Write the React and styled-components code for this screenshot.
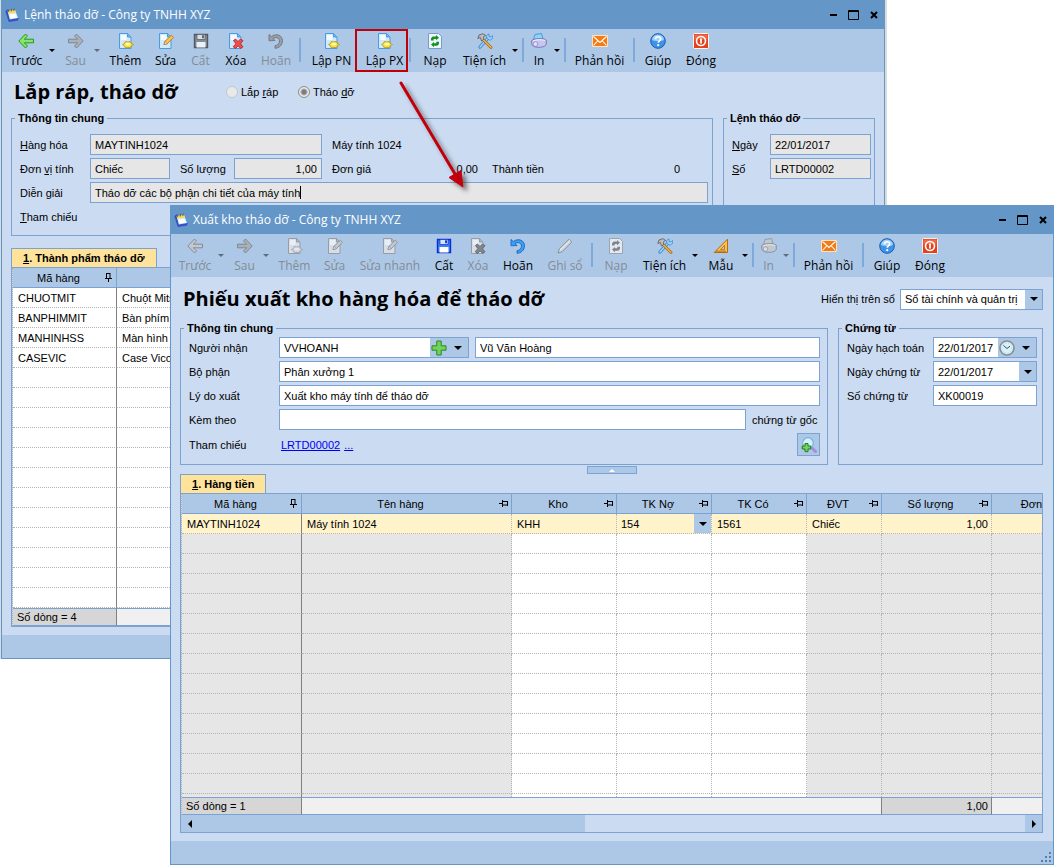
import React from "react";
import styled, { createGlobalStyle, css } from "styled-components";

const c = {
  title: "#6496c8",
  bar: "#adc8e7",
  body: "#cbdbf1",
  line: "#7ba2d0",
  readonly: "#e6e6e6",
  tab: "#ffe39b",
  active: "#fff3cc",
  red: "#c00008",
};
const uiFont = '"Open Sans", "Noto Sans", sans-serif';
const formFont = '"Liberation Sans", Arial, sans-serif';

const GlobalStyle = createGlobalStyle`
  *, *::before, *::after { box-sizing: border-box; }
  body { margin: 0; background: #fff; color: #000; font: 11px/14px ${formFont}; }
  button, input, select { font: inherit; color: inherit; margin: 0; border-radius: 0; }
`;

/* ---------- desktop and windows ---------- */

const Desktop = styled.main`
  position: relative;
  min-height: 100vh;
  overflow: hidden;
  background: linear-gradient(#d9dcdc, #d9dcdc) 0 0 / 1px 659px no-repeat #fff;
`;

const Window = styled.section`
  position: absolute;
  top: ${(p) => p.$top}px;
  left: ${(p) => p.$left}px;
  right: ${(p) => p.$right}px;
  border: 1px solid ${c.title};
  background: ${c.body};
  box-shadow: ${(p) => (p.$behind ? "2px 0 0 #dcdcdc" : "none")};
`;

const TitleBar = styled.header`
  display: flex;
  align-items: center;
  gap: 5px;
  height: 28px;
  padding: 0 4px 0 3px;
  background: ${c.title};
  color: #fff;
  font: 12px/16px ${uiFont};
`;

const TitleText = styled.span`
  flex: 1;
  white-space: nowrap;
`;

const WindowButtons = styled.div`
  display: flex;
  gap: 8px;
`;

const WindowButton = styled.button`
  display: flex;
  padding: 0;
  border: 0;
  background: none;
`;

const StatusBar = styled.footer`
  display: flex;
  justify-content: flex-end;
  align-items: flex-end;
  height: 23px;
  background: ${c.bar};
`;

const Body = styled.div`
  padding: 0 ${(p) => p.$right}px ${(p) => p.$bottom}px 9px;
`;

/* ---------- toolbar ---------- */

const Toolbar = styled.nav`
  display: flex;
  height: 43px;
  padding: 0 2px;
  background: ${c.bar};
`;

const ToolButton = styled.button`
  flex: none;
  display: flex;
  flex-direction: column;
  align-items: center;
  gap: 4px;
  width: ${(p) => p.$w}px;
  padding: 4px 0 0 ${(p) => (p.$indent ? 6 : 0)}px;
  border: 0;
  background: none;
  font: 12px/16px ${uiFont};
  white-space: nowrap;
  &:disabled {
    color: #858b93;
  }
  &:disabled svg {
    filter: grayscale(1) opacity(0.75);
  }
  ${(p) =>
    p.$marked &&
    css`
      outline: 2px solid ${c.red};
      outline-offset: -2px;
    `}
`;

const DropButton = styled.button`
  flex: none;
  display: flex;
  justify-content: center;
  align-items: center;
  width: 7px;
  margin-right: 3px;
  padding: 0;
  border: 0;
  background: none;
  &:disabled {
    color: #5f6c7c;
  }
`;

const Divider = styled.span`
  flex: none;
  width: 2px;
  height: 24px;
  margin: 9px 1px 0;
  background: #7fa9db;
`;

/* ---------- form ---------- */

const Heading = styled.div`
  display: flex;
  align-items: center;
  height: ${(p) => p.$h}px;
  padding-left: 3px;
`;

const PageTitle = styled.h1`
  flex: ${(p) => (p.$basis ? `0 0 ${p.$basis}px` : "1")};
  margin: 0;
  font: bold 20px/26px ${uiFont};
  white-space: nowrap;
`;

const Choice = styled.label`
  display: flex;
  align-items: center;
  gap: 3px;
  width: 72px;
  white-space: nowrap;
`;

const Radio = styled.input`
  appearance: none;
  width: 12px;
  height: 12px;
  border: 1px solid ${(p) => (p.defaultChecked ? "#8c8c8c" : "#c4c8ce")};
  border-radius: 50%;
  background: #e9e9e9;
  &:checked {
    background: radial-gradient(circle, #7d7d7d 0 2px, #e9e9e9 4px);
  }
`;

const Groups = styled.div`
  display: flex;
  gap: 10px;
`;

const Group = styled.fieldset`
  display: flex;
  flex-direction: column;
  gap: 3px;
  flex: ${(p) => (p.$w ? `0 0 ${p.$w}px` : "1")};
  min-width: 0;
  margin: 0;
  padding: ${(p) => p.$top}px ${(p) => p.$right}px 8px 8px;
  border: 1px solid ${c.line};
`;

const Legend = styled.legend`
  margin-left: -5px;
  padding: 0 3px;
  font-weight: bold;
  line-height: 14px;
`;

const Row = styled.div`
  display: flex;
  align-items: center;
  min-height: 21px;
  white-space: nowrap;
`;

const Label = styled.label`
  flex: none;
  width: ${(p) => p.$w}px;
`;

const Spacer = styled.span`
  flex: ${(p) => (p.$w ? `0 0 ${p.$w}px` : "1")};
`;

const Figure = styled.output`
  flex: none;
  width: ${(p) => p.$w}px;
  text-align: right;
`;

const Frame = styled.div`
  flex: ${(p) => (p.$w ? `0 0 ${p.$w}px` : "1")};
  display: flex;
  min-width: 0;
  height: 21px;
  border: 1px solid ${c.line};
  background: ${(p) => (p.$readonly ? c.readonly : "#fff")};
`;

const TextInput = styled.input`
  flex: 1;
  min-width: 0;
  width: 100%;
  padding: 0 4px;
  border: 0;
  outline: 0;
  background: transparent;
  text-align: ${(p) => (p.$end ? "right" : "left")};
`;

const GrowingInput = styled(TextInput)`
  flex: none;
  width: auto;
  field-sizing: content;
  padding-right: 0;
`;

const Caret = styled.span`
  width: 1px;
  margin: 3px 0;
  background: #000;
`;

const FrameButton = styled.button`
  flex: none;
  display: flex;
  justify-content: center;
  align-items: center;
  width: ${(p) => p.$w}px;
  padding: 0;
  border: 0;
  background: ${c.bar};
`;

const SelectBox = styled.select`
  appearance: none;
  flex: 1;
  min-width: 0;
  padding: 0 4px;
  border: 0;
  background: transparent;
`;

const SelectArrow = styled.span`
  flex: none;
  display: flex;
  justify-content: center;
  align-items: center;
  width: 17px;
  background: ${c.bar};
  pointer-events: none;
`;

const Link = styled.a`
  margin-left: 2px;
  color: #0000f0;
  text-decoration: underline;
`;

const SearchButton = styled.button`
  display: flex;
  justify-content: center;
  align-items: center;
  width: 23px;
  height: 23px;
  padding: 0;
  border: 1px solid ${c.line};
  background: ${c.bar};
`;

const Collapser = styled.button`
  display: flex;
  justify-content: center;
  align-items: center;
  width: 50px;
  height: 8px;
  margin: 1px auto 0;
  padding: 0;
  border: 1px solid ${c.line};
  background: ${c.bar};
`;

/* ---------- grid ---------- */

const GridArea = styled.div`
  padding-top: ${(p) => p.$top}px;
`;

const Tab = styled.button`
  display: block;
  height: 19px;
  padding: 0 11px;
  border: 1px solid ${c.line};
  border-bottom: 0;
  background: ${c.tab};
  font-weight: bold;
  white-space: nowrap;
`;

const GridFrame = styled.div`
  border: 1px solid ${c.line};
`;

const Grid = styled.table`
  table-layout: fixed;
  width: 100%;
  border-spacing: 0;
  border-left: 1px dotted #b4b4b4;
`;

const HeadCell = styled.th`
  height: 20px;
  padding: 0 ${(p) => (p.$last ? 0 : 3)}px 0 0;
  overflow: hidden;
  border-right: ${(p) => (p.$last ? "0" : `1px solid ${c.line}`)};
  border-bottom: 1px solid ${c.line};
  background: ${c.bar};
  font-weight: normal;
  white-space: nowrap;
`;

const HeadInner = styled.div`
  display: flex;
  align-items: center;
  & > span {
    flex: 1;
    text-align: ${(p) => (p.$last ? "right" : "center")};
  }
`;

const Cell = styled.td`
  height: ${(p) => (p.$stub ? 3 : 20)}px;
  padding: 0 ${(p) => (p.$edit ? 0 : 3)}px 0 ${(p) => (p.$edit ? 0 : 5)}px;
  overflow: hidden;
  border-right: 1px ${(p) => (p.$first ? "solid #808080" : "dotted #b4b4b4")};
  border-bottom: ${(p) => (p.$stub ? "0" : "1px dotted #b4b4b4")};
  background: ${(p) => (p.$active ? c.active : p.$locked ? c.readonly : "#fff")};
  text-align: ${(p) => (p.$end ? "right" : "left")};
  white-space: nowrap;
  &:last-child {
    border-right: 0;
  }
`;

const CellEditor = styled.div`
  display: flex;
  height: 19px;
`;

const FootCell = styled.td`
  height: 18px;
  padding: 0 3px 0 4px;
  border-top: 1px solid ${c.line};
  border-bottom: 1px solid ${c.line};
  border-right: 1px solid #808080;
  background: ${(p) => (p.$sum ? "#d6d6d6" : "#f0f0f0")};
  text-align: ${(p) => (p.$end ? "right" : "left")};
  &:last-child {
    border-right: 0;
  }
`;

const ScrollBar = styled.div`
  display: flex;
  height: 17px;
  background: ${c.body};
`;

const ScrollThumb = styled.span`
  flex: 0 0 45%;
  background: ${c.bar};
`;

const Pointer = styled.svg`
  position: absolute;
  left: 390px;
  top: 76px;
  z-index: 1;
  pointer-events: none;
`;

/* ---------- drawings ---------- */

const Triangle = ({ size = 8 }) => (
  <svg width={size} height={size / 2} viewBox="0 0 8 4" fill="currentColor" aria-hidden="true">
    <path d="M0 0h8L4 4z" />
  </svg>
);

const Page = () => (
  <>
    <path d="M1.500.500h8l3.500 3.500v11.500h-11.500z" fill="#cfeafd" stroke="#4a9be0" />
    <path d="M3 2h5.500v5H3z" fill="#fff" opacity=".8" />
    <path d="M9.500.500V4h3.500z" fill="#7fbdf2" stroke="#4a9be0" />
  </>
);

const drawings = {
  back: (
    <path d="M.800 8L7.500 1l2 2L6.300 6.200h9.200v3.600H6.300L9.500 13l-2 2z" fill="#8be36b" stroke="#1f9a1f" strokeLinejoin="round" />
  ),
  next: (
    <path d="M15.200 8L8.500 1l-2 2 3.200 3.200H.500v3.600h9.200L6.500 13l2 2z" fill="#a9a9a9" stroke="#707070" strokeLinejoin="round" />
  ),
  add: (
    <>
      <Page />
      <path d="M4.500 11.500l2-1 .8-2 2.500.5 2.500-.5 1 2 2.200 1-2.200 1.300-1 2-2.500-.4-2.500.4-.8-2z" fill="#f5e64a" stroke="#b99a14" strokeWidth=".9" />
      <ellipse cx="9.800" cy="11" rx="2.400" ry="1.200" fill="#fff9a8" />
    </>
  ),
  edit: (
    <>
      <Page />
      <path d="M6 11.500l1-3.200 6.300-6 2.200 2-6.200 6.400z" fill="#ffc64a" stroke="#b9781a" strokeWidth=".9" />
      <path d="M6 11.500l1-3.200 2.300 2.400z" fill="#fff1cf" stroke="#8a5a18" strokeWidth=".5" />
    </>
  ),
  save: (
    <>
      <path d="M1.500 1.500h13v13h-13z" fill="#3f7df0" stroke="#0a2fd0" strokeWidth="1.400" />
      <path d="M4 1.500h8v5H4z" fill="#d7e6ff" stroke="#0a2fd0" strokeWidth=".7" />
      <path d="M9 2.300h2v3H9z" fill="#1b46d8" />
      <path d="M3.500 9h9v5.500h-9z" fill="#fff" />
    </>
  ),
  remove: (
    <>
      <Page />
      <path d="M5.500 7.500l2-1.500L10 8.500 12.500 6l2.500 1.700-2.800 3 2.800 3-2.300 1.800L10 12.800l-2.500 2.700-2.300-1.800 2.700-3z" fill="#f0504a" stroke="#b51218" strokeWidth=".8" />
    </>
  ),
  undo: (
    <path d="M1 1.500v6.300l6-.3-2-2c3-1.800 6.500-.6 6.500 2.500 0 2.700-2 4.300-4.500 4.800v2.500c4-.2 7.500-3 7.500-7.500C14.500 2.300 8.500-.2 3.300 3.500z" fill="#3d9ff0" stroke="#1465c4" strokeWidth=".9" strokeLinejoin="round" />
  ),
  pen: (
    <>
      <path d="M1 15l1.200-4L12 1.300 14.800 4 5 13.800z" fill="#d9d9d9" stroke="#757575" strokeWidth=".9" />
      <path d="M3 12L13 2.500" stroke="#fff" />
    </>
  ),
  reload: (
    <>
      <path d="M1.500.500h10l3 3v12h-13z" fill="#eef4fd" stroke="#7b9cc8" />
      <path d="M4 7.500V5.200l1.700-1.700H9V2l3 2.700L9 7.300V6H6.700v1.500z" fill="#17921c" />
      <path d="M12 8.800v2.300l-1.700 1.700H7v1.500l-3-2.700L7 9v1.300h2.300V8.800z" fill="#17921c" />
    </>
  ),
  tools: (
    <>
      <path d="M3 14l8-9" stroke="#2f82d4" strokeWidth="3.200" strokeLinecap="round" />
      <path d="M3 14l8-9" stroke="#9fd5fa" strokeWidth="1.600" strokeLinecap="round" />
      <path d="M10 5.500L9.500 2.500 12 .800v3h2.500L16 2.200l-.500 3.300-2.500 1.800z" fill="#9fd5fa" stroke="#2f82d4" strokeWidth=".7" />
      <path d="M6.500 7l7.500 7.500" stroke="#a3661b" strokeWidth="2.800" strokeLinecap="round" />
      <path d="M6.500 7l7.500 7.500" stroke="#f5b54a" strokeWidth="1.200" strokeLinecap="round" />
      <path d="M.800 5.500L2 2 6 .700l2.700 1.800-2 1-.200 3L4.500 8 3.300 4.500z" fill="#bcbcbc" stroke="#5b5b5b" strokeWidth=".8" />
    </>
  ),
  print: (
    <>
      <path d="M2.500 6.500L4 1.500l6.500-1L12 6z" fill="#8fd3f7" stroke="#2e8fd3" strokeWidth=".8" />
      <path d="M.700 7.500C3 5.500 12 4.500 15.300 7.200v4.300c-1.500 2.300-5 3-8 2.800C3.500 14.300.700 13 .700 10.500z" fill="#c7c4ee" stroke="#7470b8" strokeWidth=".9" />
      <path d="M2 8c3-1.500 9-1.700 12-.5" stroke="#f3f2ff" />
      <ellipse cx="4.500" cy="11" rx="2.300" ry="2.300" fill="#e5e3fb" stroke="#7f7bc4" strokeWidth=".7" />
    </>
  ),
  mail: (
    <>
      <path d="M.500 2.500h15v11H.500z" fill="#f47a14" stroke="#ffe2bd" />
      <path d="M1.500 3.500L8 9.500l6.500-6M1.500 12.500l4.500-5M14.500 12.500l-4.500-5" fill="none" stroke="#fff" strokeWidth="1.100" />
    </>
  ),
  help: (
    <>
      <circle cx="8" cy="8" r="7.300" fill="#3c93ea" stroke="#1b5cae" />
      <path d="M2 7a6 5.500 0 0 1 12 0c-3 1.500-9 1.500-12 0z" fill="#9fd0fb" />
      <path d="M5.500 6.200c0-3.200 5.200-3.200 5.200-.2C10.700 8 8.200 7.800 8.200 9.800" fill="none" stroke="#fff" strokeWidth="1.700" />
      <circle cx="8.200" cy="12.200" r="1.100" fill="#fff" />
    </>
  ),
  power: (
    <>
      <rect x=".5" y=".5" width="15" height="15" rx="1" fill="#e5401c" stroke="#fff2ec" />
      <path d="M1.500 1.500h13v5h-13z" fill="#f37a58" opacity=".7" />
      <circle cx="8" cy="8" r="4.500" fill="none" stroke="#fff" strokeWidth="1.600" />
      <path d="M8 5.500v5" stroke="#fff" strokeWidth="1.800" />
    </>
  ),
  ruler: (
    <>
      <path d="M1.200 14.500L14.500 1.200v13.300z" fill="#ffc04a" stroke="#b86a12" />
      <path d="M7.500 11.500l4-4v4z" fill="#adc8e7" stroke="#b86a12" strokeWidth=".8" />
      <path d="M4 14v-1.500M6 14v-1.500M8 14v-1.500M10 14v-1.500M12 14v-1.500" stroke="#6b3a06" strokeWidth=".8" />
    </>
  ),
  plus: (
    <path d="M5.800 1h4.400v4.800H15v4.400h-4.800V15H5.800v-4.800H1V5.800h4.800z" fill="#72d25a" stroke="#258a24" />
  ),
  clock: (
    <>
      <circle cx="8" cy="8" r="7" fill="#d6f1fa" stroke="#8d8d8d" strokeWidth="1.600" />
      <circle cx="8" cy="8" r="5" fill="none" stroke="#9fd7ea" strokeDasharray="1 2" />
      <path d="M4.500 5.500L8 8.500l3-2.300" fill="none" stroke="#4d4d4d" />
    </>
  ),
  find: (
    <>
      <path d="M11 11l3.500 3.500" stroke="#a58cd6" strokeWidth="3" strokeLinecap="round" />
      <circle cx="7" cy="6" r="5.300" fill="#d5f0fd" stroke="#6fb3e3" strokeWidth="1.200" />
      <path d="M4 6.500h3v2.500h2.700v3H7v2.700H4V12H1.200V9H4z" fill="#72d25a" stroke="#1f7f20" />
    </>
  ),
  app: (
    <>
      <path d="M.800 3.500L3 2l1.500 10.500 10.700-1.200-.7 2.700-10 1.500z" fill="#3a4fd8" stroke="#2f3fae" strokeWidth=".6" />
      <path d="M3 3.500l8.500-1L15 11.500l-9.500 1.700z" fill="#c9edfb" />
      <path d="M5 7.500l7-1 1.700 4.300-7.500 1.200z" fill="#fff" />
      <path d="M3.200 3.500l8.300-1.200 1 2.700-8.700 1.500z" fill="#ffd94a" />
      <path d="M4 4.500L4.500 1.500M7 4l.5-3M10 3.500L10.500.800" stroke="#55504a" />
    </>
  ),
};

const Icon = ({ name, size = 16 }) => (
  <svg width={size} height={size} viewBox="0 0 16 16" fill="none" aria-hidden="true">
    {drawings[name]}
  </svg>
);

const Pin = ({ upright }) => (
  <svg width="9" height="9" viewBox="0 0 9 9" fill="none" stroke="#000" aria-hidden="true">
    {upright ? (
      <path d="M2.500 0v5M2 .500h4M1 5.500h7M4.500 6v3M6 0v5" />
    ) : (
      <path d="M0 4.500h3M3.500 1v7M4 2.500h5M4 6h5M8.500 2v5" />
    )}
  </svg>
);

/* ---------- shared parts ---------- */

const TitleRow = ({ children }) => (
  <TitleBar>
    <Icon name="app" size={14} />
    <TitleText>{children}</TitleText>
    <WindowButtons>
      <WindowButton aria-label="Thu nhỏ">
        <svg width="12" height="12" stroke="#000" strokeWidth="2"><path d="M2 6h7" /></svg>
      </WindowButton>
      <WindowButton aria-label="Phóng to">
        <svg width="12" height="12" fill="none" stroke="#000"><path d="M.500 1.500h10v9H.500zM0 2.500h11" /></svg>
      </WindowButton>
      <WindowButton aria-label="Đóng cửa sổ">
        <svg width="12" height="12" stroke="#000" strokeWidth="2"><path d="M3 3l6 6M9 3l-6 6" /></svg>
      </WindowButton>
    </WindowButtons>
  </TitleBar>
);

const Tools = ({ items }) => (
  <Toolbar>
    {items.map((t, i) =>
      t === "|" ? (
        <Divider key={i} />
      ) : (
        <React.Fragment key={i}>
          <ToolButton $w={t.w} $marked={t.marked} $indent={t.indent} disabled={t.off}>
            <Icon name={t.icon} />
            {t.text}
          </ToolButton>
          {t.drop && (
            <DropButton disabled={t.off} aria-label={`${t.text}: thêm lựa chọn`}>
              <Triangle size={6} />
            </DropButton>
          )}
        </React.Fragment>
      )
    )}
  </Toolbar>
);

const Field = ({ id, w, value, readOnly, end, children }) => (
  <Frame $w={w} $readonly={readOnly}>
    <TextInput id={id} defaultValue={value} readOnly={readOnly} $end={end} aria-label={id ? undefined : "Tên"} />
    {children}
  </Frame>
);

const Head = ({ columns }) => (
  <>
    <colgroup>
      {columns.map((col) => (
        <col key={col.name} style={col.w ? { width: col.w } : undefined} />
      ))}
    </colgroup>
    <thead>
      <tr>
        {columns.map((col, i) => (
          <HeadCell key={col.name} $last={!col.w}>
            <HeadInner $last={!col.w}>
              <span>{col.name}</span>
              {col.w && <Pin upright={i === 0} />}
            </HeadInner>
          </HeadCell>
        ))}
      </tr>
    </thead>
  </>
);

/* ---------- data ---------- */

const orderTools = [
  { icon: "back", text: "Trước", w: 44, drop: true },
  { icon: "next", text: "Sau", w: 35, drop: true, off: true },
  { icon: "add", text: "Thêm", w: 45 },
  { icon: "edit", text: "Sửa", w: 35 },
  { icon: "save", text: "Cất", w: 35, off: true },
  { icon: "remove", text: "Xóa", w: 36 },
  { icon: "undo", text: "Hoãn", w: 44, off: true },
  "|",
  { icon: "add", text: "Lập PN", w: 53, indent: true },
  { icon: "add", text: "Lập PX", w: 53, indent: true, marked: true },
  "|",
  { icon: "reload", text: "Nạp", w: 46 },
  { icon: "tools", text: "Tiện ích", w: 53, drop: true },
  "|",
  { icon: "print", text: "In", w: 28, drop: true },
  "|",
  { icon: "mail", text: "Phản hồi", w: 65 },
  "|",
  { icon: "help", text: "Giúp", w: 44 },
  { icon: "power", text: "Đóng", w: 42 },
];

const issueTools = [
  { icon: "back", text: "Trước", w: 44, drop: true, off: true },
  { icon: "next", text: "Sau", w: 35, drop: true, off: true },
  { icon: "add", text: "Thêm", w: 45, off: true },
  { icon: "edit", text: "Sửa", w: 35, off: true },
  { icon: "edit", text: "Sửa nhanh", w: 76, off: true },
  { icon: "save", text: "Cất", w: 32 },
  { icon: "remove", text: "Xóa", w: 36, off: true },
  { icon: "undo", text: "Hoãn", w: 44 },
  { icon: "pen", text: "Ghi sổ", w: 50, off: true },
  "|",
  { icon: "reload", text: "Nạp", w: 44, off: true },
  { icon: "tools", text: "Tiện ích", w: 53, drop: true },
  { icon: "ruler", text: "Mẫu", w: 40, drop: true },
  "|",
  { icon: "print", text: "In", w: 27, drop: true, off: true },
  "|",
  { icon: "mail", text: "Phản hồi", w: 65 },
  "|",
  { icon: "help", text: "Giúp", w: 44 },
  { icon: "power", text: "Đóng", w: 42 },
];

const partRows = [
  ["CHUOTMIT", "Chuột Mitsumi"],
  ["BANPHIMMIT", "Bàn phím Mitsumi"],
  ["MANHINHSS", "Màn hình Samsung"],
  ["CASEVIC", "Case Vicom"],
];

const issueColumns = [
  { name: "Mã hàng", w: 120, locked: true },
  { name: "Tên hàng", w: 210, locked: true },
  { name: "Kho", w: 105 },
  { name: "TK Nợ", w: 95 },
  { name: "TK Có", w: 95 },
  { name: "ĐVT", w: 75, locked: true },
  { name: "Số lượng", w: 110, locked: true, end: true },
  { name: "Đơn", locked: true },
];
const issueRow = ["MAYTINH1024", "Máy tính 1024", "KHH", "154", "1561", "Chiếc", "1,00", ""];

const range = (n) => Array.from({ length: n }, (_, i) => i);

/* ---------- windows ---------- */

function OrderWindow() {
  return (
    <Window $top={0} $left={1} $right={169} $behind>
      <TitleRow>Lệnh tháo dỡ - Công ty TNHH XYZ</TitleRow>
      <Tools items={orderTools} />
      <Body $right={9} $bottom={8}>
        <Heading $h={39}>
          <PageTitle $basis={212}>Lắp ráp, tháo dỡ</PageTitle>
          <Choice>
            <Radio type="radio" name="kind" />
            <span>Lắp <u>r</u>áp</span>
          </Choice>
          <Choice>
            <Radio type="radio" name="kind" defaultChecked />
            <span>Tháo <u>d</u>ỡ</span>
          </Choice>
        </Heading>
        <Groups>
          <Group $top={9} $right={4}>
            <Legend>Thông tin chung</Legend>
            <Row>
              <Label $w={70} htmlFor="item"><u>H</u>àng hóa</Label>
              <Field id="item" w={232} value="MAYTINH1024" readOnly />
              <Spacer $w={10} />
              <span>Máy tính 1024</span>
            </Row>
            <Row>
              <Label $w={70} htmlFor="unit">Đơn <u>vị</u> tính</Label>
              <Field id="unit" w={80} value="Chiếc" readOnly />
              <Spacer $w={10} />
              <Label $w={54} htmlFor="qty">Số lượn<u>g</u></Label>
              <Field id="qty" w={88} value="1,00" readOnly end />
              <Spacer $w={10} />
              <Label $w={76} htmlFor="price">Đơn giá</Label>
              <Figure $w={70} id="price">0,00</Figure>
              <Spacer $w={14} />
              <Label $w={76} htmlFor="total">Thành tiền</Label>
              <Figure $w={112} id="total">0</Figure>
            </Row>
            <Row>
              <Label $w={70} htmlFor="note">Diễn <u>g</u>iải</Label>
              <Frame $readonly>
                <GrowingInput id="note" defaultValue="Tháo dỡ các bộ phận chi tiết của máy tính" />
                <Caret />
              </Frame>
            </Row>
            <Row><span><u>T</u>ham chiếu</span></Row>
          </Group>
          <Group $top={9} $right={3} $w={152}>
            <Legend>Lệnh tháo dỡ</Legend>
            <Row>
              <Label $w={38} htmlFor="odate"><u>N</u>gày</Label>
              <Field id="odate" value="22/01/2017" readOnly />
            </Row>
            <Row>
              <Label $w={38} htmlFor="ono"><u>S</u>ố</Label>
              <Field id="ono" value="LRTD00002" readOnly />
            </Row>
          </Group>
        </Groups>
        <GridArea $top={12}>
          <Tab><u>1</u>. Thành phẩm tháo dỡ</Tab>
          <GridFrame>
            <Grid>
              <Head columns={[{ name: "Mã hàng", w: 104 }, { name: "Tên hàng" }]} />
              <tbody>
                {range(16).map((i) => (
                  <tr key={i}>
                    <Cell $first>{partRows[i]?.[0]}</Cell>
                    <Cell>{partRows[i]?.[1]}</Cell>
                  </tr>
                ))}
              </tbody>
              <tfoot>
                <tr>
                  <FootCell $sum>Số dòng = 4</FootCell>
                  <FootCell />
                </tr>
              </tfoot>
            </Grid>
          </GridFrame>
        </GridArea>
      </Body>
      <StatusBar />
    </Window>
  );
}

function IssueWindow() {
  return (
    <Window $top={205} $left={170} $right={0}>
      <TitleRow>Xuất kho tháo dỡ - Công ty TNHH XYZ</TitleRow>
      <Tools items={issueTools} />
      <Body $right={10} $bottom={8}>
        <Heading $h={44}>
          <PageTitle>Phiếu xuất kho hàng hóa để tháo dỡ</PageTitle>
          <Label $w={79} htmlFor="book">Hiển thị trên sổ</Label>
          <Frame $w={143}>
            <SelectBox id="book">
              <option>Sổ tài chính và quản trị</option>
            </SelectBox>
            <SelectArrow><Triangle /></SelectArrow>
          </Frame>
        </Heading>
        <Groups>
          <Group $top={2} $right={7}>
            <Legend>Thông tin chung</Legend>
            <Row>
              <Label $w={90} htmlFor="who">Người nhận</Label>
              <Field id="who" w={190} value="VVHOANH">
                <FrameButton $w={18} aria-label="Thêm người nhận"><Icon name="plus" /></FrameButton>
                <FrameButton $w={20} aria-label="Chọn người nhận"><Triangle /></FrameButton>
              </Field>
              <Spacer $w={6} />
              <Field value="Vũ Văn Hoàng" />
            </Row>
            <Row>
              <Label $w={90} htmlFor="dept">Bộ phận</Label>
              <Field id="dept" value="Phân xưởng 1" />
            </Row>
            <Row>
              <Label $w={90} htmlFor="why">Lý do xuất</Label>
              <Field id="why" value="Xuất kho máy tính để tháo dỡ" />
            </Row>
            <Row>
              <Label $w={90} htmlFor="with">Kèm theo</Label>
              <Field id="with" value="" />
              <Spacer $w={6} />
              <Label $w={68} htmlFor="with">chứng từ gốc</Label>
            </Row>
            <Row>
              <Label as="span" $w={90}>Tham chiếu</Label>
              <Link href="#lrtd00002">LRTD00002</Link>
              <Spacer $w={2} />
              <Link href="#more">...</Link>
              <Spacer />
              <SearchButton aria-label="Tìm chứng từ"><Icon name="find" /></SearchButton>
            </Row>
          </Group>
          <Group $top={2} $right={5} $w={205}>
            <Legend>Chứng từ</Legend>
            <Row>
              <Label $w={86} htmlFor="pdate">Ngày hạch toán</Label>
              <Field id="pdate" value="22/01/2017">
                <FrameButton $w={18} aria-label="Chọn giờ"><Icon name="clock" /></FrameButton>
                <FrameButton $w={20} aria-label="Chọn ngày hạch toán"><Triangle /></FrameButton>
              </Field>
            </Row>
            <Row>
              <Label $w={86} htmlFor="vdate">Ngày chứng từ</Label>
              <Field id="vdate" value="22/01/2017">
                <FrameButton $w={17} aria-label="Chọn ngày chứng từ"><Triangle /></FrameButton>
              </Field>
            </Row>
            <Row>
              <Label $w={86} htmlFor="vno">Số chứng từ</Label>
              <Field id="vno" value="XK00019" />
            </Row>
          </Group>
        </Groups>
        <Collapser aria-label="Thu gọn">
          <svg width="6" height="3" viewBox="0 0 6 3" fill="#fff"><path d="M0 3l3-3 3 3z" /></svg>
        </Collapser>
        <GridArea $top={0}>
          <Tab><u>1</u>. Hàng tiền</Tab>
          <GridFrame>
            <Grid>
              <Head columns={issueColumns} />
              <tbody>
                {range(15).map((r) => (
                  <tr key={r}>
                    {issueColumns.map((col, i) => {
                      const edit = r === 0 && i === 3;
                      return (
                        <Cell
                          key={col.name}
                          $first={i === 0}
                          $locked={col.locked}
                          $active={r === 0}
                          $end={col.end}
                          $stub={r === 14}
                          $edit={edit}
                        >
                          {edit ? (
                            <CellEditor>
                              <SelectBox aria-label="TK Nợ"><option>154</option></SelectBox>
                              <SelectArrow><Triangle /></SelectArrow>
                            </CellEditor>
                          ) : (
                            r === 0 && issueRow[i]
                          )}
                        </Cell>
                      );
                    })}
                  </tr>
                ))}
              </tbody>
              <tfoot>
                <tr>
                  <FootCell $sum>Số dòng = 1</FootCell>
                  <FootCell colSpan={5} />
                  <FootCell $sum $end>1,00</FootCell>
                  <FootCell />
                </tr>
              </tfoot>
            </Grid>
            <ScrollBar>
              <FrameButton $w={17} aria-label="Cuộn trái">
                <svg width="4" height="8"><path d="M4 0v8L0 4z" /></svg>
              </FrameButton>
              <ScrollThumb />
              <Spacer />
              <FrameButton $w={17} aria-label="Cuộn phải">
                <svg width="4" height="8"><path d="M0 0v8l4-4z" /></svg>
              </FrameButton>
            </ScrollBar>
          </GridFrame>
        </GridArea>
      </Body>
      <StatusBar>
        <svg width="14" height="14" fill="#4f7fb5" aria-hidden="true">
          <path d="M10 2h2v2h-2zM10 6h2v2h-2zM10 10h2v2h-2zM6 6h2v2H6zM6 10h2v2H6zM2 10h2v2H2z" />
        </svg>
      </StatusBar>
    </Window>
  );
}

export default function App() {
  return (
    <>
      <GlobalStyle />
      <Desktop>
        <OrderWindow />
        <IssueWindow />
        <Pointer width="90" height="125" viewBox="0 0 90 125" aria-hidden="true">
          <defs>
            <filter id="soft" x="-20%" y="-20%" width="150%" height="150%">
              <feDropShadow dx="4" dy="4" stdDeviation="2" floodColor="#333" floodOpacity=".6" />
            </filter>
          </defs>
          <g filter="url(#soft)">
            <path d="M11 7l54 91" stroke={c.red} strokeWidth="3" strokeLinecap="round" />
            <path d="M73 111L59 101.500l12-7z" fill={c.red} stroke={c.red} />
          </g>
        </Pointer>
      </Desktop>
    </>
  );
}
